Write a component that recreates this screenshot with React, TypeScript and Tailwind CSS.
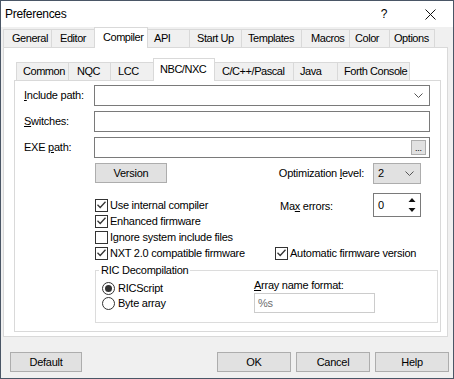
import React from "react";

type Tab = { l: string; w: number; pl: number; sel?: boolean };

const topTabs: Tab[] = [
  { l: "General", w: 48, pl: 8 },
  { l: "Editor", w: 45, pl: 8 },
  { l: "Compiler", w: 50, pl: 6, sel: true },
  { l: "API", w: 43, pl: 7 },
  { l: "Start Up", w: 52, pl: 7 },
  { l: "Templates", w: 60, pl: 6 },
  { l: "Macros", w: 48, pl: 9 },
  { l: "Color", w: 40, pl: 5 },
  { l: "Options", w: 46, pl: 4 },
];

const innerTabs: Tab[] = [
  { l: "Common", w: 52, pl: 6 },
  { l: "NQC", w: 42, pl: 8 },
  { l: "LCC", w: 45, pl: 7 },
  { l: "NBC/NXC", w: 58, pl: 4, sel: true },
  { l: "C/C++/Pascal", w: 80, pl: 8 },
  { l: "Java", w: 44, pl: 6 },
  { l: "Forth Console", w: 73, pl: 6 },
];

function TabStrip({ tabs, selH, h }: { tabs: Tab[]; selH: number; h: number }) {
  return (
    <div className="flex items-end tracking-[-0.45px]" style={{ height: h }}>
      {tabs.map((t, i) =>
        t.sel ? (
          <div
            key={t.l}
            className="relative z-10 -mx-[2px] mb-[-1px] flex items-center pb-[2px] bg-white border-t border-l border-r border-[#d9d9d9] whitespace-nowrap"
            style={{ width: t.w + 4, height: selH, paddingLeft: t.pl + 2 }}
          >
            {t.l}
          </div>
        ) : (
          <div
            key={t.l}
            className={
              "h-[18px] flex items-center bg-[#f0f0f0] border-t border-l border-[#d9d9d9] whitespace-nowrap" +
              (i === tabs.length - 1 ? " border-r" : "")
            }
            style={{ width: t.w, paddingLeft: t.pl }}
          >
            {t.l}
          </div>
        )
      )}
    </div>
  );
}

function Chevron() {
  return (
    <svg width="9" height="5" viewBox="0 0 9 5">
      <polyline points="0.5,0.5 4.5,4.5 8.5,0.5" fill="none" stroke="#555" strokeWidth="1" />
    </svg>
  );
}

function Check({ checked, label }: { checked: boolean; label: string }) {
  return (
    <div className="flex items-center h-[16px]">
      <span className="w-[13px] h-[13px] border border-[#333] bg-white flex items-center justify-center shrink-0">
        {checked && (
          <svg width="9" height="8" viewBox="0 0 9 8">
            <polyline points="0.5,3.8 3.2,6.5 8.5,0.8" fill="none" stroke="#333" strokeWidth="1.3" />
          </svg>
        )}
      </span>
      <span className="ml-[2px] whitespace-nowrap">{label}</span>
    </div>
  );
}

function Radio({ checked, label }: { checked: boolean; label: string }) {
  return (
    <div className="flex items-center h-[15px]">
      <span className="w-[13px] h-[13px] rounded-full border border-[#333] bg-white flex items-center justify-center shrink-0">
        {checked && <span className="w-[7px] h-[7px] rounded-full bg-[#333]" />}
      </span>
      <span className="ml-[3px] whitespace-nowrap">{label}</span>
    </div>
  );
}

function Button({ label, w }: { label: string; w: string }) {
  return (
    <div className={"h-[20px] bg-[#e1e1e1] border border-[#adadad] flex items-center justify-center " + w}>
      {label}
    </div>
  );
}

export default function App() {
  return (
    <div className="w-[454px] h-[379px] border border-[#4a5666] bg-[#f0f0f0] flex flex-col text-[11px] leading-[13px] tracking-[-0.25px] text-black font-['Liberation_Sans',Arial,sans-serif]">
      {/* Title bar */}
      <div className="h-[26px] bg-white flex items-center shrink-0">
        <div className="flex-1 pl-[4px] text-[12px] tracking-[-0.3px]">Preferences</div>
        <div className="w-[46px] flex justify-center text-[12px]">?</div>
        <div className="w-[46px] flex justify-center">
          <svg width="11" height="11" viewBox="0 0 11 11">
            <line x1="0.5" y1="0.5" x2="10.5" y2="10.5" stroke="#111" strokeWidth="1" />
            <line x1="10.5" y1="0.5" x2="0.5" y2="10.5" stroke="#111" strokeWidth="1" />
          </svg>
        </div>
      </div>

      {/* Top tabs */}
      <div className="ml-[2px]">
        <TabStrip tabs={topTabs} selH={21} h={20} />
      </div>

      {/* Outer panel */}
      <div className="ml-[2px] w-[445px] h-[290px] border border-[#d9d9d9] bg-white shrink-0">
        <div className="ml-[12px] mt-[10px]">
          <TabStrip tabs={innerTabs} selH={23} h={22} />
        </div>

        {/* Inner panel */}
        <div className="ml-[10px] w-[427px] h-[252px] border border-[#d9d9d9] bg-white">
          <div className="pl-[9px] pt-[4px] flex flex-col">
            {/* Include path */}
            <div className="flex items-center h-[21px]">
              <div className="w-[70px]">
                <u>I</u>nclude path:
              </div>
              <div className="w-[336px] h-[21px] border border-[#7a7a7a] bg-white flex items-center justify-end pr-[6px]">
                <Chevron />
              </div>
            </div>
            {/* Switches */}
            <div className="flex items-center h-[21px] mt-[5px]">
              <div className="w-[70px]">
                <u>S</u>witches:
              </div>
              <div className="w-[336px] h-[21px] border border-[#7a7a7a] bg-white" />
            </div>
            {/* EXE path */}
            <div className="flex items-center h-[21px] mt-[5px]">
              <div className="w-[70px]">
                EXE <u>p</u>ath:
              </div>
              <div className="w-[336px] h-[21px] border border-[#7a7a7a] bg-white flex items-center justify-end pr-[3px]">
                <div className="w-[15px] h-[15px] bg-[#e1e1e1] border border-[#adadad] flex items-end justify-center pb-[1px] text-[9px] leading-[9px]">
                  ...
                </div>
              </div>
            </div>

            {/* Lower area */}
            <div className="ml-[71px] w-[343px]">
              {/* Version row */}
              <div className="mt-[5px] w-[326px] flex items-center h-[20px]">
                <Button label="Version" w="w-[72px]" />
                <div className="flex-1" />
                <div className="whitespace-nowrap">
                  Optimization <u>l</u>evel:
                </div>
                <div className="ml-[9px] w-[48px] h-[21px] bg-[#e1e1e1] border border-[#adadad] flex items-center justify-between pl-[4px] pr-[6px]">
                  <span>2</span>
                  <Chevron />
                </div>
              </div>

              {/* Checks + Max errors */}
              <div className="mt-[10px] flex">
                <div className="w-[180px] pt-[4px]">
                  <Check checked label="Use internal compiler" />
                  <Check checked label="Enhanced firmware" />
                  <Check checked={false} label="Ignore system include files" />
                </div>
                <div className="w-[146px] pl-[5px] flex items-center h-[24px]">
                  <div className="flex-1 pt-[3px]">
                    Ma<u>x</u> errors:
                  </div>
                  <div className="w-[48px] h-[24px] border border-[#7a7a7a] bg-white flex items-center justify-between pl-[4px] pr-[4px]">
                    <span>0</span>
                    <svg width="8" height="16" viewBox="0 0 8 16">
                      <polygon points="4,1 7.5,5 0.5,5" fill="#111" />
                      <polygon points="0.5,11 7.5,11 4,15" fill="#111" />
                    </svg>
                  </div>
                </div>
              </div>

              {/* NXT row */}
              <div className="flex">
                <div className="w-[180px]">
                  <Check checked label="NXT 2.0 compatible firmware" />
                </div>
                <Check checked label="Automatic firmware version" />
              </div>

              {/* Group box */}
              <fieldset className="mt-[3px] w-[343px] h-[59px] border border-[#dcdcdc]">
                <legend className="ml-[3px] px-[2px] leading-[13px]">RIC Decompilation</legend>
                <div className="flex">
                  <div className="w-[158px] pl-[6px] pt-[4px]">
                    <Radio checked label="RICScript" />
                    <Radio checked={false} label="Byte array" />
                  </div>
                  <div className="pt-[2px]">
                    <div className="h-[13px]">
                      <u>A</u>rray name format:
                    </div>
                    <div className="mt-[1px] w-[121px] h-[20px] border border-[#cccccc] bg-white flex items-center pl-[3px] text-[#6d6d6d]">
                      %s
                    </div>
                  </div>
                </div>
              </fieldset>
            </div>
          </div>
        </div>
      </div>

      {/* Bottom buttons */}
      <div className="mt-[15px] flex items-center pl-[9px] pr-[4px]">
        <Button label="Default" w="w-[72px]" />
        <div className="flex-1" />
        <div className="flex gap-[5px]">
          <Button label="OK" w="w-[74px]" />
          <Button label="Cancel" w="w-[74px]" />
          <Button label="Help" w="w-[74px]" />
        </div>
      </div>
    </div>
  );
}
